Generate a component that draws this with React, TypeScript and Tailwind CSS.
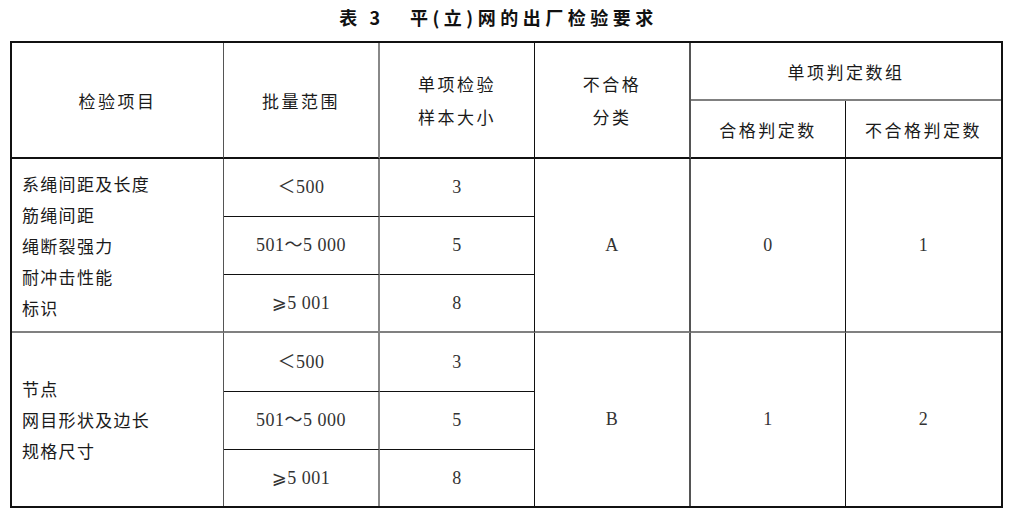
import React from "react";

const cjk = { fontFamily: '"Noto Sans CJK SC", "Noto Sans", sans-serif' };
const num = { fontFamily: '"Liberation Serif", "DejaVu Sans", "Noto Sans CJK SC", serif' };

function H({ className = "", children }: { className?: string; children: React.ReactNode }) {
  return (
    <div
      className={`flex flex-col items-center justify-center text-[17px] leading-[33px] tracking-[2.5px] text-[#1a1a1a] ${className}`}
      style={cjk}
    >
      {children}
    </div>
  );
}

function N({ className = "", children }: { className?: string; children: React.ReactNode }) {
  return (
    <div
      className={`flex items-center justify-center text-[18px] tracking-[0.5px] text-[#333] ${className}`}
      style={num}
    >
      {children}
    </div>
  );
}

function Items({ className = "", lines }: { className?: string; lines: string[] }) {
  return (
    <div
      className={`flex flex-col justify-center pl-[10px] text-[17px] leading-[31px] tracking-[1.3px] text-[#1a1a1a] ${className}`}
      style={cjk}
    >
      {lines.map((l) => (
        <div key={l}>{l}</div>
      ))}
    </div>
  );
}

export default function App() {
  const c1 = "border-r border-r-[#555]";
  const c2 = "border-r-2 border-r-[#888]";
  const c3 = "border-r border-r-[#111]";
  const c4 = "border-r-2 border-r-[#555]";
  const c5 = "border-r border-r-[#111]";
  const hb = "border-b-2 border-b-[#111]";
  const rb = "border-b border-b-[#111]";
  const gb = "border-b-2 border-b-[#808080]";

  return (
    <div className="w-[1009px] h-[511px] bg-white overflow-hidden">
      <div
        className="flex justify-center pr-[12px] pt-[5px] text-[18px] leading-[24px] font-bold text-[#111]"
        style={cjk}
      >
        <span className="tracking-[4px]">表 3</span>
        <span className="ml-[26px] tracking-[4.5px]">平(立)网的出厂检验要求</span>
      </div>
      <div className="ml-[10px] mt-[12px] grid w-[993px] grid-cols-[212px_156px_155px_156px_155px_155px] grid-rows-[58px_58px_58px_58px_58px_59px_58px_56px] border-2 border-[#111]">
        {/* header */}
        <H className={`col-start-1 row-start-1 row-span-2 ${c1} ${hb}`}>检验项目</H>
        <H className={`col-start-2 row-start-1 row-span-2 ${c2} ${hb}`}>批量范围</H>
        <H className={`col-start-3 row-start-1 row-span-2 ${c3} ${hb}`}>
          <div>单项检验</div>
          <div>样本大小</div>
        </H>
        <H className={`col-start-4 row-start-1 row-span-2 ${c4} ${hb}`}>
          <div>不合格</div>
          <div>分类</div>
        </H>
        <H className={`col-start-5 col-span-2 row-start-1 ${gb}`}>单项判定数组</H>
        <H className={`col-start-5 row-start-2 ${c5} ${hb}`}>合格判定数</H>
        <H className={`col-start-6 row-start-2 ${hb}`}>不合格判定数</H>

        {/* group 1 */}
        <Items
          className={`col-start-1 row-start-3 row-span-3 ${c1} ${gb}`}
          lines={["系绳间距及长度", "筋绳间距", "绳断裂强力", "耐冲击性能", "标识"]}
        />
        <N className={`col-start-2 row-start-3 ${c2} ${rb}`}>＜500</N>
        <N className={`col-start-2 row-start-4 ${c2} ${rb}`}>501～5 000</N>
        <N className={`col-start-2 row-start-5 ${c2} ${gb}`}>⩾5 001</N>
        <N className={`col-start-3 row-start-3 ${c3} ${rb}`}>3</N>
        <N className={`col-start-3 row-start-4 ${c3} ${rb}`}>5</N>
        <N className={`col-start-3 row-start-5 ${c3} ${gb}`}>8</N>
        <N className={`col-start-4 row-start-3 row-span-3 ${c4} ${gb}`}>A</N>
        <N className={`col-start-5 row-start-3 row-span-3 ${c5} ${gb}`}>0</N>
        <N className={`col-start-6 row-start-3 row-span-3 ${gb}`}>1</N>

        {/* group 2 */}
        <Items
          className={`col-start-1 row-start-6 row-span-3 ${c1}`}
          lines={["节点", "网目形状及边长", "规格尺寸"]}
        />
        <N className={`col-start-2 row-start-6 ${c2} ${rb}`}>＜500</N>
        <N className={`col-start-2 row-start-7 ${c2} ${rb}`}>501～5 000</N>
        <N className={`col-start-2 row-start-8 ${c2}`}>⩾5 001</N>
        <N className={`col-start-3 row-start-6 ${c3} ${rb}`}>3</N>
        <N className={`col-start-3 row-start-7 ${c3} ${rb}`}>5</N>
        <N className={`col-start-3 row-start-8 ${c3}`}>8</N>
        <N className={`col-start-4 row-start-6 row-span-3 ${c4}`}>B</N>
        <N className={`col-start-5 row-start-6 row-span-3 ${c5}`}>1</N>
        <N className="col-start-6 row-start-6 row-span-3">2</N>
      </div>
    </div>
  );
}
